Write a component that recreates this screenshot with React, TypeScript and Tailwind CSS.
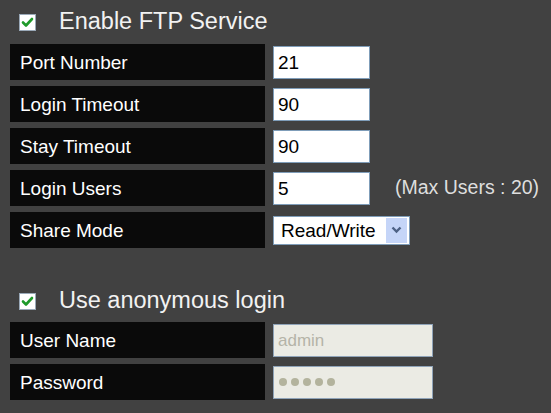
import React from "react";

function Check() {
  return (
    <div className="w-[17px] h-[17px] bg-white border border-[#9aa9b8] flex items-center justify-center">
      <svg width="13" height="13" viewBox="0 0 13 13">
        <path d="M2 6.5 L5 9.5 L11 3" stroke="#1f9a2a" strokeWidth="2.6" fill="none" strokeLinecap="round" strokeLinejoin="round" />
      </svg>
    </div>
  );
}

function Label({ text }: { text: string }) {
  return (
    <div className="w-[255px] h-[36px] bg-[#0a0a0a] flex items-center pl-[10px] text-white text-[19px] leading-none">
      {text}
    </div>
  );
}

function TextBox({ value }: { value: string }) {
  return (
    <div className="w-[97px] h-[33px] bg-white border border-[#7f9db9] flex items-center pl-[4px] text-[19px] text-black leading-none">
      {value}
    </div>
  );
}

export default function App() {
  return (
    <div
      className="w-[551px] h-[413px] bg-[#414141] overflow-hidden pl-[10px]"
      style={{ fontFamily: '"Liberation Sans", Arial, sans-serif' }}
    >
      <div className="h-[44px] flex items-center">
        <div className="ml-[9px]"><Check /></div>
        <div className="ml-[23px] text-[23.5px] text-[#f2f2f2] leading-none">Enable FTP Service</div>
      </div>
      <div className="flex flex-col gap-[6px]">
        <div className="flex items-center gap-[8px]">
          <Label text="Port Number" />
          <TextBox value="21" />
        </div>
        <div className="flex items-center gap-[8px]">
          <Label text="Login Timeout" />
          <TextBox value="90" />
        </div>
        <div className="flex items-center gap-[8px]">
          <Label text="Stay Timeout" />
          <TextBox value="90" />
        </div>
        <div className="flex items-center gap-[8px]">
          <Label text="Login Users" />
          <TextBox value="5" />
          <div className="ml-[17px] text-[19.5px] text-[#dedede] leading-none">(Max Users : 20)</div>
        </div>
        <div className="flex items-center gap-[8px]">
          <Label text="Share Mode" />
          <div className="w-[137px] h-[29px] bg-white border border-[#7f9db9] flex items-center justify-between pl-[7px] pr-[2px]">
            <span className="text-[19px] text-black leading-none">Read/Write</span>
            <div className="w-[21px] h-[25px] bg-[#c5d5f8] flex items-center justify-center">
              <svg width="11" height="8" viewBox="0 0 11 8">
                <path d="M1.5 1.5 L5.5 5.5 L9.5 1.5" stroke="#4d6185" strokeWidth="2.4" fill="none" />
              </svg>
            </div>
          </div>
        </div>
      </div>
      <div className="mt-[35px] h-[36px] flex items-center">
        <div className="ml-[9px]"><Check /></div>
        <div className="ml-[23px] text-[23.5px] text-[#f2f2f2] leading-none">Use anonymous login</div>
      </div>
      <div className="mt-[3px] flex flex-col gap-[6px]">
        <div className="flex items-center gap-[8px]">
          <Label text="User Name" />
          <div className="w-[160px] h-[33px] bg-[#ebebe4] border border-[#8fa3b8] flex items-center pl-[4px] text-[17px] text-[#b5b4a8] leading-none">
            admin
          </div>
        </div>
        <div className="flex items-center gap-[8px]">
          <Label text="Password" />
          <div className="w-[160px] h-[33px] bg-[#ebebe4] border border-[#8fa3b8] flex items-center pl-[5px] gap-[4px]">
            {[0, 1, 2, 3, 4].map((i) => (
              <div key={i} className="w-[8px] h-[8px] rounded-full bg-[#b3b39d]" />
            ))}
          </div>
        </div>
      </div>
    </div>
  );
}
